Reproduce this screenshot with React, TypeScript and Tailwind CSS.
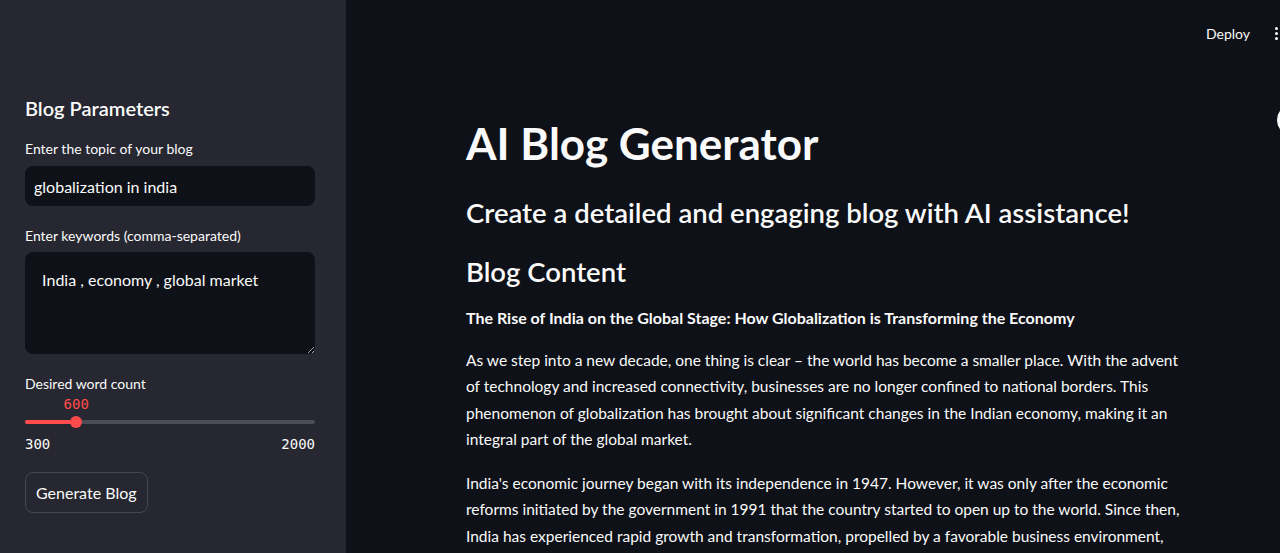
import { useState } from "react";

const paragraphs = [
  [
    "As we step into a new decade, one thing is clear – the world has become a smaller place. With the advent",
    "of technology and increased connectivity, businesses are no longer confined to national borders. This",
    "phenomenon of globalization has brought about significant changes in the Indian economy, making it an",
    "integral part of the global market.",
  ],
  [
    "India's economic journey began with its independence in 1947. However, it was only after the economic",
    "reforms initiated by the government in 1991 that the country started to open up to the world. Since then,",
    "India has experienced rapid growth and transformation, propelled by a favorable business environment,",
  ],
];

const Sidebar = () => {
  const [topic, setTopic] = useState("globalization in india");
  const [keywords, setKeywords] = useState(" India , economy , global market");
  const min = 300;
  const max = 2000;
  const value = 600;
  const pct = ((value - min) / (max - min)) * 100;

  return (
    <aside className="flex w-[346px] shrink-0 flex-col bg-[#262730] px-[25px] pt-[95px]">
      <div className="w-[290px]">
        <h2 className="text-[20px] leading-[26px] font-semibold text-[#fafafa]">Blog Parameters</h2>

        <label className="mt-[18px] block text-[14px] leading-[20px] text-[#fafafa]">Enter the topic of your blog</label>
        <input
          value={topic}
          onChange={(e) => setTopic(e.target.value)}
          className="mt-[7px] h-[40px] w-full rounded-lg bg-[#0e1117] px-[9px] text-[16px] text-[#fafafa] outline-none"
        />

        <label className="mt-[20px] block text-[14px] leading-[20px] text-[#fafafa]">Enter keywords (comma-separated)</label>
        <textarea
          value={keywords}
          onChange={(e) => setKeywords(e.target.value)}
          className="mt-[6px] block h-[102px] w-full resize-y rounded-lg bg-[#0e1117] px-[13px] pt-[15px] text-[16px] leading-[26px] whitespace-pre text-[#fafafa] outline-none"
        />

        <label className="mt-[20px] block text-[14px] leading-[20px] text-[#fafafa]">Desired word count</label>
        <div className="relative h-[40px]">
          <div
            className="absolute top-[2px] -translate-x-1/2 font-['DejaVu_Sans_Mono',monospace] text-[14px] leading-[16px] text-[#ff4b4b]"
            style={{ left: `${pct}%` }}
          >
            {value}
          </div>
          <div className="absolute top-[26px] h-[4px] w-full rounded-full bg-[#4b4c55]">
            <div className="h-full rounded-full bg-[#ff4b4b]" style={{ width: `${pct}%` }} />
          </div>
          <div
            className="absolute top-[22px] h-[12px] w-[12px] -translate-x-1/2 rounded-full bg-[#ff4b4b]"
            style={{ left: `${pct}%` }}
          />
        </div>
        <div className="flex justify-between font-['DejaVu_Sans_Mono',monospace] text-[14px] leading-[20px] text-[#fafafa]">
          <span>{min}</span>
          <span>{max}</span>
        </div>

        <button className="mt-[18px] h-[41px] rounded-lg border border-[#45464f] bg-[#262730] px-[10px] text-[16px] text-[#fafafa]">
          Generate Blog
        </button>
      </div>
    </aside>
  );
};

const App = () => {
  return (
    <div className="flex h-[553px] w-[1280px] overflow-hidden bg-[#0e1117] font-['Lato','Liberation_Sans',sans-serif] text-[#fafafa]">
      <Sidebar />
      <main className="relative flex flex-1 flex-col">
        <header className="flex h-[67px] items-center justify-end gap-[25px]">
          <span className="text-[14px] text-[#fafafa]">Deploy</span>
          <div className="flex w-[5px] flex-col items-start gap-[2px] self-center">
            <span className="h-[3px] w-[3px] rounded-full bg-[#fafafa]" />
            <span className="h-[3px] w-[3px] rounded-full bg-[#fafafa]" />
            <span className="h-[3px] w-[3px] rounded-full bg-[#fafafa]" />
          </div>
        </header>
        <div className="absolute top-[104px] left-[931px] h-[32px] w-[32px] rounded-full bg-white" />

        <div className="ml-[120px] w-[730px] pt-[49px]">
          <h1 className="text-[44px] leading-[54px] font-bold">AI Blog Generator</h1>
          <h3 className="mt-[25px] text-[27.5px] leading-[36px] font-semibold">
            Create a detailed and engaging blog with AI assistance!
          </h3>
          <h3 className="mt-[23px] text-[27.5px] leading-[36px] font-semibold">Blog Content</h3>
          <p className="mt-[16px] text-[16px] leading-[24px] font-bold">
            The Rise of India on the Global Stage: How Globalization is Transforming the Economy
          </p>
          {paragraphs.map((lines, i) => (
            <p
              key={i}
              className={`${i === 0 ? "mt-[17px]" : "mt-[18px]"} text-[15.5px] leading-[26.3px] whitespace-nowrap`}
            >
              {lines.map((l, j) => (
                <span key={j}>
                  {l}
                  {j < lines.length - 1 && <br />}
                </span>
              ))}
            </p>
          ))}
        </div>
      </main>
    </div>
  );
};

export default App;
